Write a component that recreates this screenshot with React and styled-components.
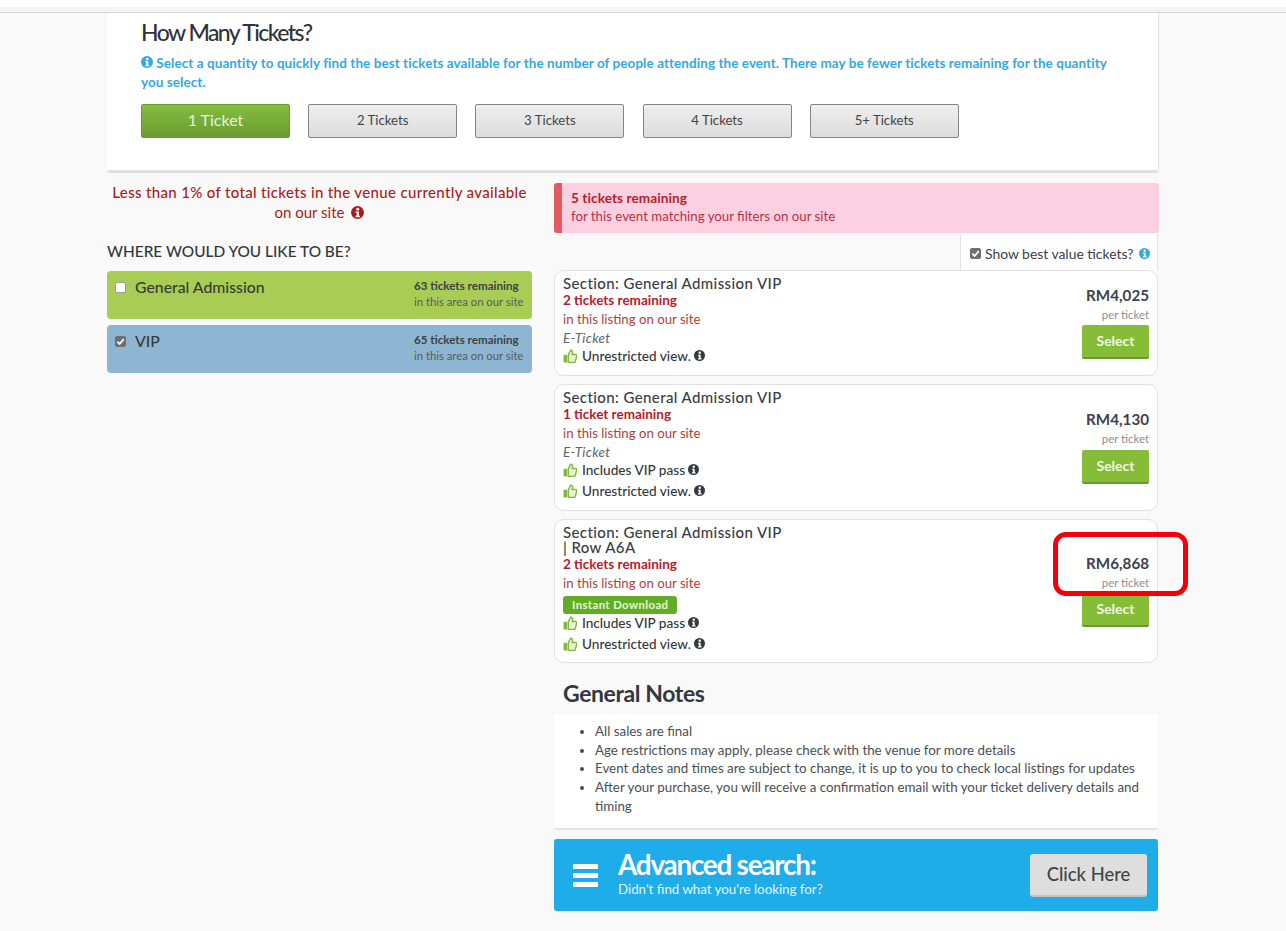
import React from "react";
import styled, { createGlobalStyle } from "styled-components";

const Global = createGlobalStyle`
  html, body { margin: 0; padding: 0; background: #f9f9f9; }
  body { font-family: "Lato", "Open Sans", sans-serif; color: #333a40; }
`;

const Page = styled.div`
  position: relative;
  width: 1286px;
  height: 931px;
  overflow: hidden;
`;
const TopStrip = styled.div`
  height: 7px;
  background: #fff;
`;
const TopBand = styled.div`
  height: 5px;
  background: #f4f4f4;
  border-bottom: 1px solid #d4d4d4;
`;
const Content = styled.div`
  width: 1052px;
  margin-left: 107px;
`;
const QuantityCard = styled.section`
  box-sizing: border-box;
  height: 160px;
  padding: 6px 34px 0;
  background: #fff;
  border-right: 1px solid #e2e2e2;
  border-bottom: 3px solid #dfdfdf;
  border-radius: 0 0 3px 3px;
`;
const Title = styled.h1`
  margin: 0;
  font-size: 23px;
  line-height: 27px;
  font-weight: 500;
  letter-spacing: -1.57px;
  color: #2f3338;
`;
const Hint = styled.p`
  margin: 8px 0 0;
  width: 980px;
  font-size: 13.5px;
  line-height: 19px;
  font-weight: 700;
  color: #35a8e0;
  letter-spacing: 0.06px;
`;
const QuantityRow = styled.div`
  display: flex;
  gap: 18.2px;
  margin-top: 12px;
`;
const QuantityButton = styled.button`
  box-sizing: border-box;
  width: 149px;
  height: 34px;
  padding: 0 0 ${(p) => (p.$active ? "3px" : "2px")};
  font-family: inherit;
  border: 1px solid ${(p) => (p.$active ? "#6b9a35" : "#858585")};
  border-radius: 2px;
  font-size: ${(p) => (p.$active ? "16px" : "13.2px")};
  color: ${(p) => (p.$active ? "#e9f4da" : "#444")};
  background: ${(p) =>
    p.$active
      ? "linear-gradient(#84bd40, #6a9c30)"
      : "linear-gradient(#efefef, #dcdcdc)"};
`;
const Columns = styled.div`
  display: grid;
  grid-template-columns: 425px 605px;
  column-gap: 22px;
  margin-top: 10px;
`;
const Availability = styled.p`
  margin: -1px 0 0;
  text-align: center;
  font-size: 15px;
  line-height: 20px;
  letter-spacing: 0.34px;
  color: #ab1c1c;
  font-weight: 500;
`;
const AvailabilityLight = styled.span`
  font-weight: 400;
  font-size: 15px;
  letter-spacing: 0;
  display: inline-flex;
  align-items: center;
  gap: 7px;
`;
const AreaHeading = styled.h2`
  margin: 19px 0 10px;
  font-size: 15.4px;
  line-height: 20px;
  font-weight: 500;
  color: #32373c;
`;
const Area = styled.div`
  box-sizing: border-box;
  display: flex;
  justify-content: space-between;
  height: 48px;
  margin-bottom: 6px;
  padding: 7px 8px 0 8px;
  border-radius: 4px;
  background: ${(p) => p.$bg};
`;
const AreaName = styled.label`
  display: flex;
  align-items: flex-start;
  gap: 9px;
  font-size: 15.8px;
  line-height: 18px;
  font-weight: 500;
  color: #363b38;
`;
const Box = styled.span`
  flex: none;
  box-sizing: border-box;
  display: inline-flex;
  align-items: center;
  justify-content: center;
  width: 11px;
  height: 11px;
  margin-top: 4px;
  border-radius: 2px;
  background: ${(p) => (p.$checked ? "#6f6f6f" : "#fff")};
  border: 1px solid ${(p) => (p.$checked ? "#6f6f6f" : "#999")};
`;
const AreaCount = styled.div`
  width: 110px;
  font-size: 11.3px;
  line-height: 16px;
  color: #555b5c;
`;
const AreaStrong = styled.div`
  font-size: 11.6px;
  font-weight: 700;
  color: #3c4245;
  white-space: nowrap;
`;
const AreaSmall = styled.div`
  white-space: nowrap;
`;
const Alert = styled.div`
  box-sizing: border-box;
  height: 50px;
  padding: 6px 0 0 9px;
  background: #fbd0e0;
  border-left: 8px solid #e25b62;
  border-radius: 3px;
  font-size: 13.25px;
  line-height: 18px;
  color: #b83245;
`;
const AlertStrong = styled.div`
  font-size: 13.6px;
  letter-spacing: 0.08px;
  font-weight: 700;
  color: #b5202f;
`;
const BestRow = styled.div`
  display: flex;
  justify-content: flex-end;
  height: 36px;
  margin: 1px 1px 0 0;
`;
const BestBox = styled.label`
  box-sizing: border-box;
  display: flex;
  align-items: center;
  gap: 3px;
  width: 198px;
  padding: 3px 0 0 9px;
  background: #fff;
  border-left: 1px solid #e2e2e2;
  border-right: 1px solid #e2e2e2;
  font-size: 13.9px;
  color: #3a3f44;
  white-space: nowrap;
`;
const BestBoxMark = styled(Box)`
  margin: 0 1px 0 0;
`;
const BestInfo = styled.span`
  display: inline-flex;
  margin-left: 3px;
`;
const Listing = styled.article`
  box-sizing: border-box;
  display: flex;
  justify-content: space-between;
  align-items: center;
  height: ${(p) => p.$h}px;
  margin: 0 1px 8px 0;
  padding: 5px 8px 0;
  background: #fff;
  border: 1px solid #e1e1e1;
  border-radius: 10px;
`;
const ListingBody = styled.div`
  align-self: flex-start;
  width: 240px;
`;
const ListingTitle = styled.div`
  font-size: 15px;
  line-height: 15px;
  letter-spacing: 0.4px;
  font-weight: 500;
  color: #383d41;
`;
const TicketsLeft = styled.div`
  font-size: 13.5px;
  line-height: 19px;
  font-weight: 700;
  color: #b3202c;
`;
const TicketsWhere = styled.div`
  font-size: 13.2px;
  line-height: 19px;
  color: #aa3f3f;
`;
const TicketType = styled.div`
  font-size: 13.5px;
  line-height: 19px;
  letter-spacing: 0.3px;
  font-style: italic;
  color: #60656a;
`;
const Badge = styled.span`
  display: inline-block;
  padding: 0 9px;
  margin: 1px 0 1px;
  height: 18px;
  line-height: 18px;
  font-size: 11.4px;
  letter-spacing: 0.38px;
  font-weight: 700;
  background: #63ad26;
  color: #e7f5d5;
  border-radius: 3px;
`;
const Feature = styled.div`
  display: flex;
  align-items: center;
  gap: 3px;
  height: 21px;
  font-size: 13.6px;
  font-weight: 500;
  color: #33383c;
  white-space: nowrap;
`;
const Features = styled.div`
  margin-top: -3px;
`;
const ThumbSlot = styled.span`
  display: inline-flex;
  margin-right: 2px;
`;
const ListingPrice = styled.div`
  display: flex;
  flex-direction: column;
  align-items: flex-end;
  margin-top: -8px;
`;
const Price = styled.div`
  font-size: 15.2px;
  line-height: 20px;
  font-weight: 700;
  color: #3d4247;
`;
const PerTicket = styled.div`
  margin-top: 2px;
  font-size: 11.4px;
  line-height: 16px;
  color: #8b8f93;
`;
const SelectButton = styled.button`
  box-sizing: border-box;
  width: 67px;
  height: 34px;
  margin-top: ${(p) => p.$gap}px;
  padding: 0 0 1px;
  font-family: inherit;
  font-size: 14px;
  font-weight: 700;
  color: #f0f7e4;
  background: #86bd38;
  border: 0;
  border-bottom: 2px solid #669a2c;
  border-radius: 2px;
`;
const NotesHeading = styled.h2`
  margin: 17px 0 7px 9px;
  font-size: 23px;
  line-height: 27px;
  font-weight: 700;
  letter-spacing: -0.4px;
  color: #33383d;
`;
const Notes = styled.ul`
  box-sizing: border-box;
  height: 116px;
  margin: 0 1px 0 0;
  padding: 8px 15px 0 41px;
  background: #fff;
  border-bottom: 2px solid #e3e3e3;
  border-radius: 3px;
  font-size: 13.35px;
  line-height: 18.7px;
  color: #4a4f54;
`;
const AdvancedBar = styled.div`
  box-sizing: border-box;
  display: flex;
  align-items: center;
  height: 72px;
  margin: 9px 1px 0 0;
  padding: 0 11px 0 19px;
  background: #1fade9;
  border-radius: 3px;
  color: #fff;
`;
const AdvancedText = styled.div`
  flex: 1;
  margin-left: 20px;
  padding-bottom: 3px;
`;
const AdvancedTitle = styled.div`
  font-size: 27.8px;
  line-height: 28px;
  font-weight: 700;
  letter-spacing: -1.2px;
`;
const AdvancedSub = styled.div`
  margin-top: 2px;
  font-size: 13.3px;
  line-height: 16px;
  color: #e4f5fd;
`;
const ClickHere = styled.button`
  width: 117px;
  height: 43px;
  padding: 0;
  font-family: inherit;
  font-size: 18.4px;
  font-weight: 500;
  color: #444;
  background: #dedede;
  border: 0;
  border-bottom: 2px solid #c4c4c4;
  border-radius: 3px;
`;
const Highlight = styled.div`
  position: absolute;
  left: 1053px;
  top: 532px;
  box-sizing: border-box;
  width: 135px;
  height: 64px;
  border: 5px solid #f4000a;
  border-radius: 13px;
`;

const InfoIcon = ({ color = "#333a40", size = 12 }) => (
  <svg width={size} height={size} viewBox="0 0 24 24" style={{ flex: "none" }}>
    <circle cx="12" cy="12" r="12" fill={color} />
    <circle cx="12.5" cy="6" r="2.6" fill="#fff" />
    <path d="M8.5 10.2h6v8h2v2.4h-8v-2.4h2v-5.6h-2z" fill="#fff" />
  </svg>
);

const ThumbIcon = () => (
  <svg width="14" height="14" viewBox="0 0 24 24" style={{ flex: "none" }}>
    <rect x="1" y="10" width="6" height="13" fill="#7fb83a" />
    <path
      d="M9 10.5 13 2c3 0 4 2.5 3 5.5l-.6 1.8H22c1.4 0 2 1.4 1.6 2.6l-2.6 9.4c-.3 1-1 1.7-2 1.7H9z"
      fill="#e9f4da"
      stroke="#7fb83a"
      strokeWidth="2.4"
      strokeLinejoin="round"
    />
  </svg>
);

const Check = ({ checked }) =>
  checked ? (
    <svg width="9" height="9" viewBox="0 0 10 10">
      <path d="M1.5 5.2 4 7.8 8.6 2.4" fill="none" stroke="#fff" strokeWidth="2" />
    </svg>
  ) : null;

const BurgerIcon = () => (
  <svg width="25" height="23" viewBox="0 0 25 23" style={{ flex: "none" }}>
    <rect x="0" y="0" width="25" height="5" rx="1" fill="#fff" />
    <rect x="0" y="9" width="25" height="5" rx="1" fill="#fff" />
    <rect x="0" y="18" width="25" height="5" rx="1" fill="#fff" />
  </svg>
);

const quantities = ["1 Ticket", "2 Tickets", "3 Tickets", "4 Tickets", "5+ Tickets"];

const areas = [
  { name: "General Admission", bg: "#a9cc55", count: "63 tickets remaining", checked: false },
  { name: "VIP", bg: "#8eb6d2", count: "65 tickets remaining", checked: true },
];

const listings = [
  {
    h: 106,
    title: "Section: General Admission VIP",
    left: "2 tickets remaining",
    eticket: true,
    features: ["Unrestricted view."],
    price: "RM4,025",
    gap: 2,
  },
  {
    h: 127,
    title: "Section: General Admission VIP",
    left: "1 ticket remaining",
    eticket: true,
    features: ["Includes VIP pass", "Unrestricted view."],
    price: "RM4,130",
    gap: 3,
  },
  {
    h: 144,
    title: (
      <>
        Section: General Admission VIP
        <br />| Row A6A
      </>
    ),
    left: "2 tickets remaining",
    badge: true,
    features: ["Includes VIP pass", "Unrestricted view."],
    price: "RM6,868",
    gap: 2,
  },
];

const notes = [
  "All sales are final",
  "Age restrictions may apply, please check with the venue for more details",
  "Event dates and times are subject to change, it is up to you to check local listings for updates",
  "After your purchase, you will receive a confirmation email with your ticket delivery details and timing",
];

export default function App() {
  return (
    <Page>
      <Global />
      <TopStrip />
      <TopBand />
      <Content>
        <QuantityCard>
          <Title>How Many Tickets?</Title>
          <Hint>
            <InfoIcon color="#35a8e0" size={12} /> Select a quantity to quickly find the best tickets
            available for the number of people attending the event. There may be fewer tickets
            remaining for the quantity you select.
          </Hint>
          <QuantityRow>
            {quantities.map((q, i) => (
              <QuantityButton key={q} $active={i === 0}>
                {q}
              </QuantityButton>
            ))}
          </QuantityRow>
        </QuantityCard>
        <Columns>
          <div>
            <Availability>
              Less than 1% of total tickets in the venue currently available
              <br />
              <AvailabilityLight>
                on our site <InfoIcon color="#ab1c1c" size={13} />
              </AvailabilityLight>
            </Availability>
            <AreaHeading>WHERE WOULD YOU LIKE TO BE?</AreaHeading>
            {areas.map((a) => (
              <Area key={a.name} $bg={a.bg}>
                <AreaName>
                  <Box $checked={a.checked}>
                    <Check checked={a.checked} />
                  </Box>
                  {a.name}
                </AreaName>
                <AreaCount>
                  <AreaStrong>{a.count}</AreaStrong>
                  <AreaSmall>in this area on our site</AreaSmall>
                </AreaCount>
              </Area>
            ))}
          </div>
          <div>
            <Alert>
              <AlertStrong>5 tickets remaining</AlertStrong>
              for this event matching your filters on our site
            </Alert>
            <BestRow>
              <BestBox>
                <BestBoxMark $checked>
                  <Check checked />
                </BestBoxMark>
                Show best value tickets?
                <BestInfo>
                  <InfoIcon color="#35a8e0" size={11} />
                </BestInfo>
              </BestBox>
            </BestRow>
            {listings.map((l, i) => (
              <Listing key={i} $h={l.h}>
                <ListingBody>
                  <ListingTitle>{l.title}</ListingTitle>
                  <TicketsLeft>{l.left}</TicketsLeft>
                  <TicketsWhere>in this listing on our site</TicketsWhere>
                  {l.eticket && <TicketType>E-Ticket</TicketType>}
                  {l.badge && <Badge>Instant Download</Badge>}
                  <Features>
                    {l.features.map((f) => (
                      <Feature key={f}>
                        <ThumbSlot>
                          <ThumbIcon />
                        </ThumbSlot>
                        {f}
                        <InfoIcon size={11} />
                      </Feature>
                    ))}
                  </Features>
                </ListingBody>
                <ListingPrice>
                  <Price>{l.price}</Price>
                  <PerTicket>per ticket</PerTicket>
                  <SelectButton $gap={l.gap}>Select</SelectButton>
                </ListingPrice>
              </Listing>
            ))}
            <NotesHeading>General Notes</NotesHeading>
            <Notes>
              {notes.map((n) => (
                <li key={n}>{n}</li>
              ))}
            </Notes>
            <AdvancedBar>
              <BurgerIcon />
              <AdvancedText>
                <AdvancedTitle>Advanced search:</AdvancedTitle>
                <AdvancedSub>Didn't find what you're looking for?</AdvancedSub>
              </AdvancedText>
              <ClickHere>Click Here</ClickHere>
            </AdvancedBar>
          </div>
        </Columns>
      </Content>
      <Highlight />
    </Page>
  );
}
